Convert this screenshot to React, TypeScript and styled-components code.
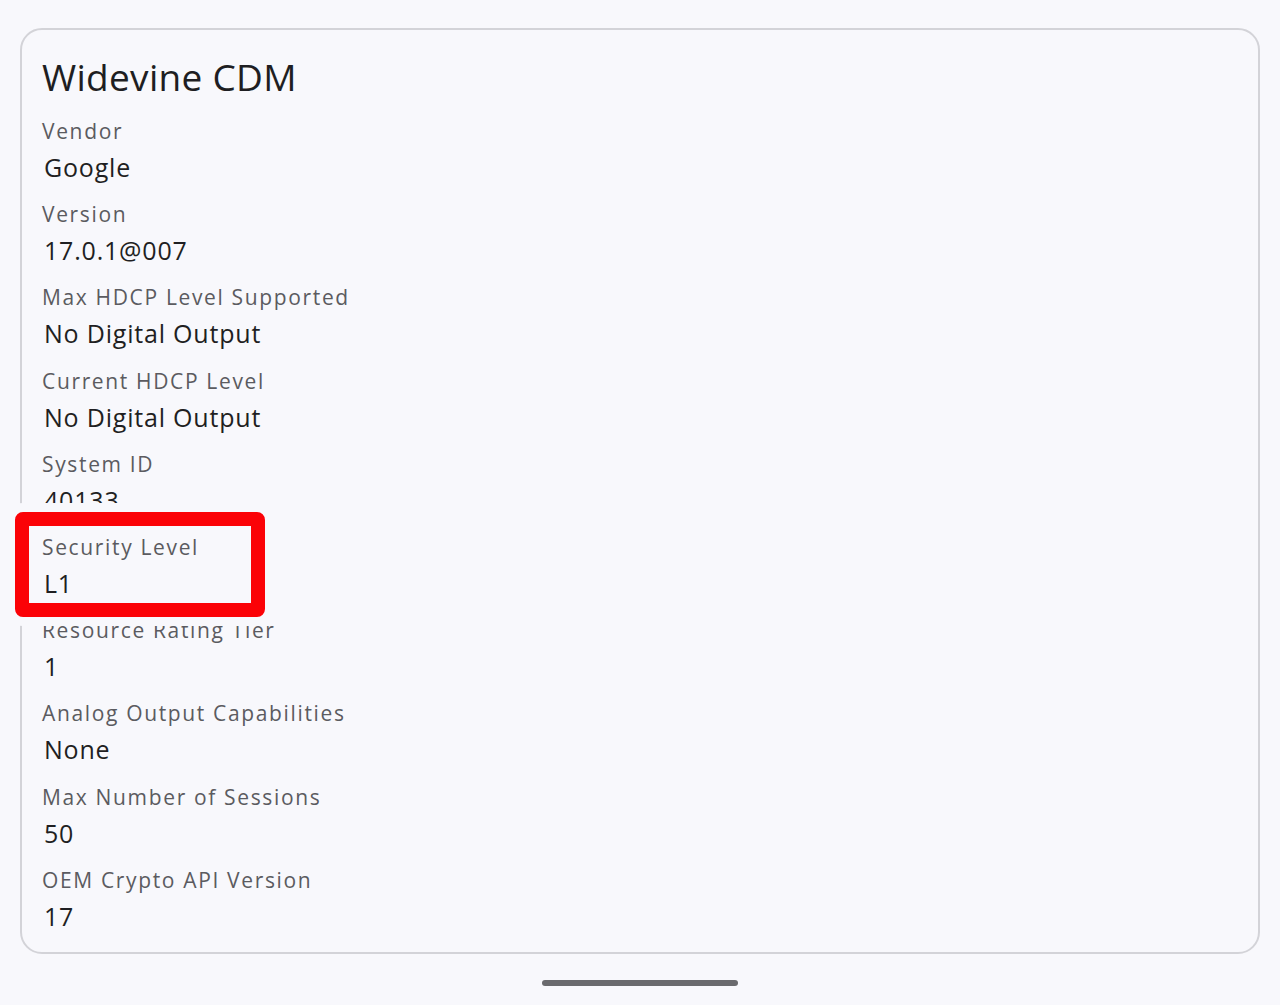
import styled, { createGlobalStyle } from "styled-components";

const GlobalStyle = createGlobalStyle`
  html, body {
    margin: 0;
    padding: 0;
    background: #f8f8fc;
  }
  body {
    font-family: "Open Sans", "Noto Sans", sans-serif;
    -webkit-font-smoothing: antialiased;
  }
`;

const items = [
  { label: "Vendor", value: "Google" },
  { label: "Version", value: "17.0.1@007" },
  { label: "Max HDCP Level Supported", value: "No Digital Output" },
  { label: "Current HDCP Level", value: "No Digital Output" },
  { label: "System ID", value: "40133" },
  { label: "Security Level", value: "L1" },
  { label: "Resource Rating Tier", value: "1" },
  { label: "Analog Output Capabilities", value: "None" },
  { label: "Max Number of Sessions", value: "50" },
  { label: "OEM Crypto API Version", value: "17" },
];

export default function App() {
  return (
    <>
      <GlobalStyle />
      <Screen>
        <Card>
          <Title>Widevine CDM</Title>
          {items.map((item) => (
            <Entry key={item.label}>
              <Label>{item.label}</Label>
              <Value>{item.value}</Value>
            </Entry>
          ))}
          <Highlight />
        </Card>
        <HomeBar />
      </Screen>
    </>
  );
}

const Screen = styled.div`
  width: 1280px;
  height: 1005px;
  padding: 28px 20px 0;
  box-sizing: border-box;
  display: flex;
  flex-direction: column;
  align-items: center;
`;

const Card = styled.div`
  position: relative;
  width: 100%;
  height: 926px;
  box-sizing: border-box;
  border: 2px solid #d3d3d8;
  border-radius: 22px;
  background: #f8f8fc;
  padding: 23px 20px 0;
`;

const Title = styled.div`
  font-size: 37px;
  line-height: 48px;
  letter-spacing: 0.3px;
  color: #1e1e22;
  margin-bottom: 14px;
`;

const Entry = styled.div`
  display: flex;
  flex-direction: column;
  margin-bottom: 11.2px;
`;

const Label = styled.div`
  font-size: 21px;
  line-height: 32px;
  letter-spacing: 1.65px;
  color: #5b5b60;
`;

const Value = styled.div`
  font-size: 25px;
  line-height: 40px;
  letter-spacing: 0.8px;
  color: #1f1f22;
  padding-left: 2px;
`;

const Highlight = styled.div`
  position: absolute;
  left: -7px;
  top: 482px;
  width: 250px;
  height: 105px;
  box-sizing: border-box;
  border: 14px solid #fb0207;
  border-radius: 8px;
  box-shadow: 0 0 0 9px #f8f8fc;
`;

const HomeBar = styled.div`
  margin-top: 26px;
  width: 196px;
  height: 6px;
  border-radius: 3px;
  background: #6a6a6e;
`;
